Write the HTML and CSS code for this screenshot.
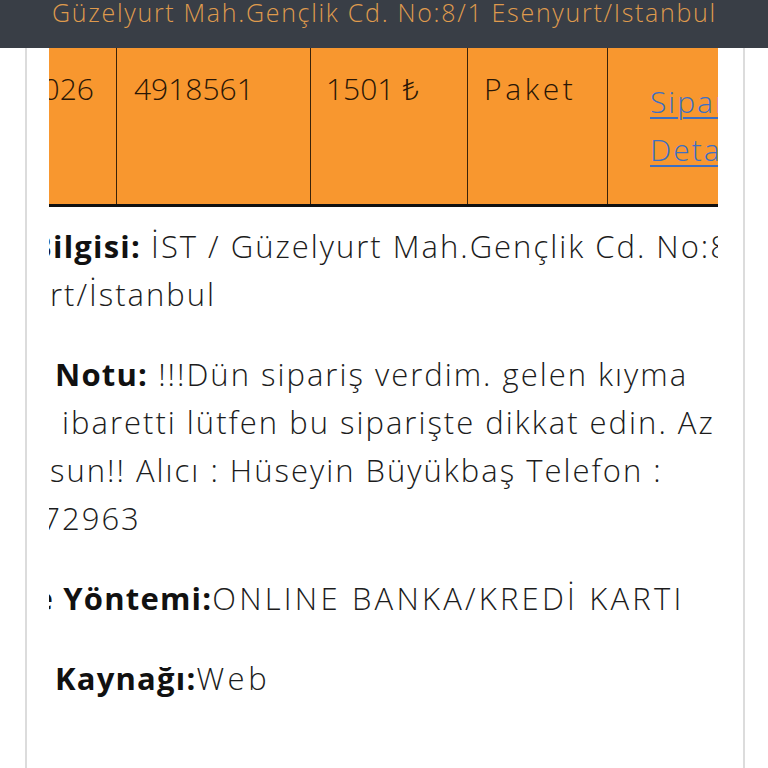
FILE: index.html
```html
<!DOCTYPE html>
<html lang="tr">
<head>
<meta charset="utf-8">
<title>Sipariş</title>
<link rel="stylesheet" href="styles.css">
</head>
<body>
<header class="topbar">Güzelyurt Mah.Gençlik Cd. No:8/1 Esenyurt/İstanbul</header>
<div class="card">
  <div class="clip">
    <div class="row">
      <div class="cell c1"><span>12.02.2026</span></div>
      <div class="cell c2">4918561</div>
      <div class="cell c3">1501 ₺</div>
      <div class="cell c4 wide">Paket</div>
      <div class="cell c5"><a href="#" class="link">Sipariş<br>Detayı</a></div>
    </div>

    <div class="para first">
      <div class="ln"><span class="cut w4"><b>Teslimat B</b></span><b>ilgisi:</b> İST / Güzelyurt Mah.Gençlik Cd. No:8/1</div>
      <div class="ln"><span class="pad1"></span>rt/İstanbul</div>
    </div>

    <div class="para">
      <div class="ln"><span class="pad7"></span><b>Notu:</b> !!!Dün sipariş verdim. gelen kıyma</div>
      <div class="ln"><span class="cut w3">yağdan</span> ibaretti lütfen bu siparişte dikkat edin. Az</div>
      <div class="ln"><span class="pad1"></span>sun!! Alıcı : Hüseyin Büyükbaş Telefon :</div>
      <div class="ln"><span class="cut w13">0532 487</span>2963</div>
    </div>

    <div class="para">
      <div class="ln"><span class="cut w5"><b>Ödeme</b></span><b> Yöntemi:</b><span class="caps">ONLINE BANKA/KREDİ KARTI</span></div>
    </div>

    <div class="para">
      <div class="ln"><span class="pad7"></span><b>Kaynağı:</b><span class="web">Web</span></div>
    </div>
  </div>
</div>
</body>
</html>
```
FILE: styles.css
```css
html, body {
  margin: 0;
  background: #ffffff;
}
body {
  font-family: "Open Sans", "Noto Sans", sans-serif;
  color: #1c1c1c;
}
.topbar {
  display: block;
  height: 48px;
  box-sizing: border-box;
  background: #393e46;
  color: #df9a4d;
  font-weight: 300;
  font-size: 25px;
  line-height: 25px;
  letter-spacing: 1.7px;
  padding-left: 52px;
  white-space: nowrap;
  overflow: hidden;
}
.card {
  margin-left: 25px;
  width: 720px;
  box-sizing: border-box;
  border-left: 2px solid #dcdcdc;
  border-right: 2px solid #dcdcdc;
  padding: 0 25px 0 22px;
  min-height: 720px;
}
.clip {
  width: 669px;
  overflow: hidden;
}
.row {
  display: flex;
  width: 900px;
  height: 159px;
  box-sizing: border-box;
  background: #f8972f;
  border-bottom: 3px solid #111;
  font-weight: 300;
  font-size: 30px;
  line-height: 48px;
  color: #2a1606;
}
.cell {
  box-sizing: border-box;
  border-right: 1px solid #3a2208;
  padding-top: 17px;
  white-space: nowrap;
  flex: none;
}
.c1 {
  width: 68px;
  display: flex;
  justify-content: flex-end;
  padding-right: 22px;
  overflow: hidden;
}
.c1 span { flex: none; }
.c2 { width: 194px; padding-left: 17px; }
.c3 { width: 157px; padding-left: 15px; }
.c4 { width: 140px; padding-left: 16px; }
.wide { letter-spacing: 3.6px; }
.c5 {
  width: 240px;
  padding-left: 42px;
  padding-top: 0;
  border-right: none;
  display: flex;
  align-items: center;
}
.link {
  color: #3d6fc2;
  text-decoration: underline;
  text-decoration-thickness: 2px;
  text-underline-offset: 4px;
  letter-spacing: 2px;
  line-height: 48px;
}
.para {
  font-weight: 300;
  font-size: 31px;
  line-height: 48px;
  letter-spacing: 2px;
  margin-bottom: 32px;
  white-space: nowrap;
}
.para.first { margin-top: 15px; }
.para b {
  font-weight: 700;
  color: #111;
  letter-spacing: 1.2px;
}
.ln { height: 48px; }
.caps { letter-spacing: 3.2px; }
.web { letter-spacing: 3.5px; }
.cut {
  display: inline-flex;
  justify-content: flex-end;
  overflow: hidden;
  vertical-align: top;
  height: 48px;
  white-space: nowrap;
}
.w3 { width: 3px; }
.w4 { width: 4px; }
.w5 { width: 5px; }
.w13 { width: 13px; }
.pad1 { display: inline-block; width: 1px; }
.pad7 { display: inline-block; width: 6px; }
```
